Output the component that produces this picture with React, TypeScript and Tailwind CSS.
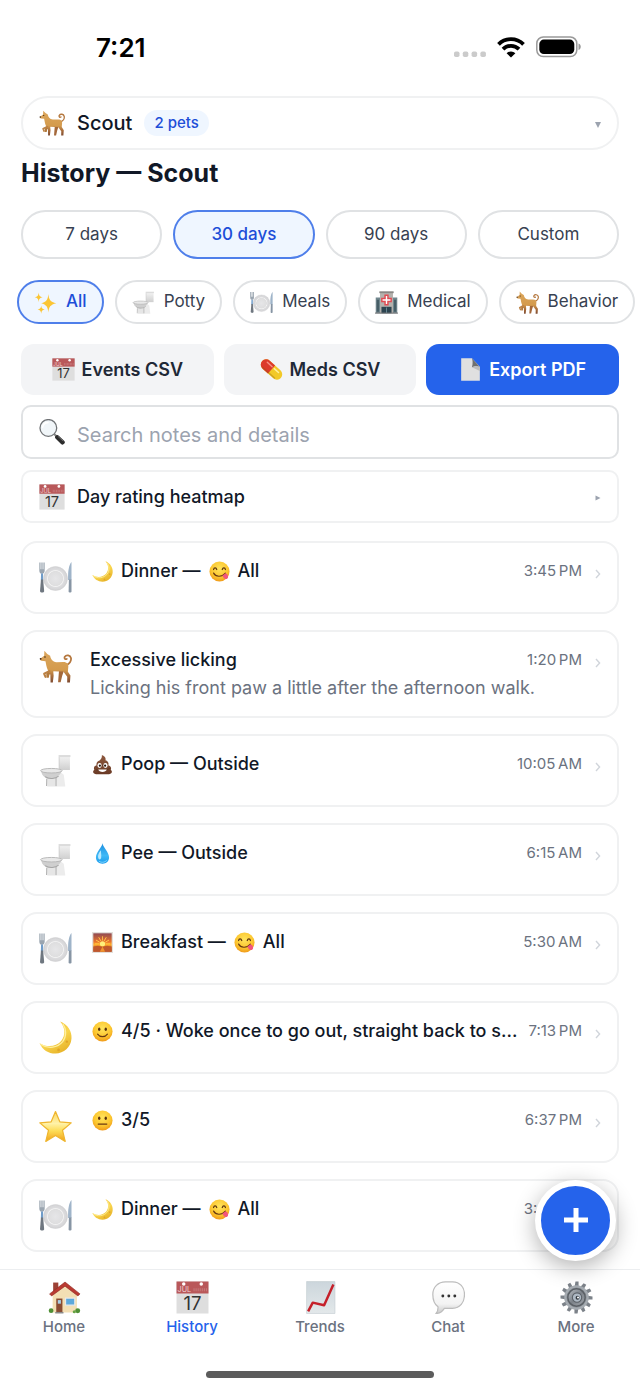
import { useState, type ReactNode } from "react";

type IconName =
  | "dog" | "sparkles" | "toilet" | "plate" | "hospital" | "calendar" | "pill" | "page"
  | "search" | "moon" | "yum" | "poop" | "drop" | "sunrise" | "smile" | "neutral"
  | "star" | "house" | "chart" | "chat" | "gear";

function Defs() {
  return (
    <svg width="0" height="0" className="absolute" aria-hidden="true">
      <defs>
        <linearGradient id="fur" x1="0" y1="0" x2="0" y2="1">
          <stop offset="0" stopColor="#dba65c" />
          <stop offset="0.6" stopColor="#d49b4d" />
          <stop offset="0.8" stopColor="#a96d3b" />
          <stop offset="1" stopColor="#7d4a30" />
        </linearGradient>
        <radialGradient id="face" cx="0.5" cy="0.35" r="0.65">
          <stop offset="0" stopColor="#ffe45c" />
          <stop offset="0.65" stopColor="#fcc62f" />
          <stop offset="1" stopColor="#f09a1a" />
        </radialGradient>
        <linearGradient id="gold" x1="0" y1="0" x2="0" y2="1">
          <stop offset="0" stopColor="#fbd660" />
          <stop offset="0.4" stopColor="#fff2a8" />
          <stop offset="0.65" stopColor="#fddc55" />
          <stop offset="1" stopColor="#f0a01c" />
        </linearGradient>
        <linearGradient id="moonFill" x1="0" y1="0" x2="0.6" y2="1">
          <stop offset="0" stopColor="#f3b92f" />
          <stop offset="0.6" stopColor="#f9d64f" />
          <stop offset="1" stopColor="#e9b62c" />
        </linearGradient>
        <linearGradient id="porcelain" x1="0" y1="0" x2="0" y2="1">
          <stop offset="0" stopColor="#f4f4f4" />
          <stop offset="1" stopColor="#cfcfcf" />
        </linearGradient>
        <radialGradient id="dish" cx="0.5" cy="0.5" r="0.5">
          <stop offset="0" stopColor="#e6e6e8" />
          <stop offset="0.6" stopColor="#dededf" />
          <stop offset="0.66" stopColor="#f3f3f3" />
          <stop offset="0.74" stopColor="#dcdcde" />
          <stop offset="1" stopColor="#d3d3d5" />
        </radialGradient>
        <linearGradient id="water" x1="0" y1="0" x2="0" y2="1">
          <stop offset="0" stopColor="#1d8fe0" />
          <stop offset="0.6" stopColor="#3fb8f6" />
          <stop offset="1" stopColor="#1a9bec" />
        </linearGradient>
        <linearGradient id="dawn" x1="0" y1="0" x2="0" y2="1">
          <stop offset="0" stopColor="#8f4a52" />
          <stop offset="0.45" stopColor="#e9732c" />
          <stop offset="0.6" stopColor="#ffae2b" />
          <stop offset="1" stopColor="#a8432a" />
        </linearGradient>
        <linearGradient id="bubble" x1="0" y1="0" x2="0" y2="1">
          <stop offset="0" stopColor="#ffffff" />
          <stop offset="0.7" stopColor="#f3f3f3" />
          <stop offset="1" stopColor="#c9c9c9" />
        </linearGradient>
        <linearGradient id="metal" x1="0" y1="0" x2="1" y2="1">
          <stop offset="0" stopColor="#b9bec4" />
          <stop offset="0.5" stopColor="#7c8289" />
          <stop offset="1" stopColor="#a0a5ab" />
        </linearGradient>
        <linearGradient id="graph" x1="0" y1="0" x2="0" y2="1">
          <stop offset="0" stopColor="#ccd6dc" />
          <stop offset="1" stopColor="#e3e8ea" />
        </linearGradient>
        <linearGradient id="turd" x1="0" y1="0" x2="0" y2="1">
          <stop offset="0" stopColor="#8e5a3f" />
          <stop offset="1" stopColor="#6a3a25" />
        </linearGradient>
      </defs>
    </svg>
  );
}

const gearTeeth = [0, 30, 60, 90, 120, 150, 180, 210, 240, 270, 300, 330];
const sunRays = [0, 30, 60, 90, 120, 150, 180];

const drawings: Record<IconName, ReactNode> = {
  dog: (
    <g>
      <path d="M26.500 14.500C29.500 13.500 31.600 10.500 31 7.800C30.300 4.900 26.500 4.300 25 6.500C24.200 8.200 25.600 9.500 27 8.600" fill="none" stroke="#b5783f" strokeWidth="1.700" strokeLinecap="round" />
      <path d="M11 19L7 23L7.300 27H9.500L10 24L14 20.500Z" fill="#b27a3c" />
      <path d="M19.500 19L19 25L18.500 31.300H21L22.500 25L24 20.500Z" fill="#a4683a" />
      <path d="M5 5.500L5.200 0.800L8 3.800L10.800 5.500C11.300 8.500 13 11.200 17 11.800L23.500 11.700C27.500 11.700 29 14 28.300 17.500L28 21L30.500 24.800L30 31.500H27.300L27.400 26L23.500 20.800L19 20.800L13.800 20.500L14.200 25L13.400 31.500H11.200L11 24L8.500 19.500C7.200 16.500 6.800 13 6.300 10.800L2.300 10.400C0.700 9.700 0.600 8.500 1.800 7.900Z" fill="url(#fur)" />
      <path d="M10 20.500L5 23L6.300 26" fill="none" stroke="#bb8144" strokeWidth="2" strokeLinecap="round" strokeLinejoin="round" />
      <circle cx="5.800" cy="6.800" r="0.700" fill="#2b1a10" />
      <circle cx="1.600" cy="8.600" r="0.900" fill="#3a2418" />
    </g>
  ),
  sparkles: (
    <g fill="#fbc534">
      <path d="M20 4C20.800 12 22.500 14.800 31 17C22.500 19.200 20.800 22 20 30C19.200 22 17.500 19.200 10 17C17.500 14.800 19.200 12 20 4Z" />
      <path d="M6.500 2C7 6.500 8 7.800 12 8.700C8 9.600 7 11 6.500 15.500C6 11 5 9.600 1 8.700C5 7.800 6 6.500 6.500 2Z" />
      <path d="M10 20C10.400 23.600 11.300 24.800 15 25.600C11.300 26.400 10.400 27.600 10 31.500C9.600 27.600 8.700 26.400 5 25.600C8.700 24.800 9.600 23.600 10 20Z" />
    </g>
  ),
  toilet: (
    <g>
      <path d="M19.500 1.500H30V15.500H19.500Z" fill="url(#porcelain)" />
      <path d="M19 1H30.500V3H19Z" fill="#dcdcdc" />
      <path d="M19.500 3V14" stroke="#c4c4c4" strokeWidth="0.700" />
      <path d="M19 16L24 20L25.500 31.500H16Z" fill="#ececec" />
      <path d="M7 21L8 31.500H17L18 22Z" fill="#e6e6e6" />
      <path d="M7.500 24L7.300 31M16.500 23V31" stroke="#b3b3b3" strokeWidth="1" />
      <path d="M2 16.500C3 22 7 24.500 12 24C17 23.700 21 20 22 16.500Z" fill="#cfcfcf" />
      <path d="M6 22C10 25 16 24 19 21.500" fill="none" stroke="#a5a5a5" strokeWidth="1" />
      <ellipse cx="12" cy="16.200" rx="10.500" ry="2.200" fill="#e8e8e8" stroke="#b5b5b5" strokeWidth="0.900" />
    </g>
  ),
  plate: (
    <g>
      <circle cx="16" cy="17" r="11.600" fill="url(#dish)" stroke="#cdcdcf" strokeWidth="0.500" />
      <path d="M0.300 1.500H1.500V8H2.300V1.500H3.500V8H4.300V1.500H5.500V9.500C5.500 11 4.500 12 3.900 12.300H1.900C1.200 12 0.300 11 0.300 9.500Z" fill="#9aa5b0" />
      <path d="M2 12H3.900L4 19H1.800Z" fill="#6f9cc9" />
      <path d="M1.900 18H4L5 29C5 31 1 31 1 29Z" fill="#6f7780" />
      <path d="M31.500 1C28.800 4 28 10 28.200 18.500H31.500Z" fill="#9fb4c9" />
      <path d="M29 18H31.500V29.500C31.500 31 28.700 31 28.700 29.500Z" fill="#8795a4" />
    </g>
  ),
  hospital: (
    <g>
      <path d="M1 9H8V31H1ZM24 9H31V31H24Z" fill="#71868d" />
      <path d="M2.500 12H5.500V29H2.500ZM26.500 12H29.500V29H26.500Z" fill="#465d66" />
      <path d="M7 1H25V31H7Z" fill="#b4b1ad" />
      <path d="M6 0.500H26V3H6Z" fill="#8a8886" />
      <path d="M14 6H18V10.500H22.500V14.500H18V19H14V14.500H9.500V10.500H14Z" fill="#fff" stroke="#e14a52" strokeWidth="2" />
      <path d="M9 22H23V31H9Z" fill="#2d4450" />
      <path d="M15.500 23H16.500V31H15.500Z" fill="#7fa0ad" />
      <path d="M0 30H32V31.500H0Z" fill="#77797a" />
    </g>
  ),
  calendar: (
    <g fontWeight="400" fontFamily="Inter, sans-serif">
      <path d="M0.500 0.500H31.500V31.500H0.500Z" fill="#dedede" />
      <path d="M0.500 0.500H31.500V12H0.500Z" fill="#b9585a" />
      <circle cx="7.500" cy="3" r="1.700" fill="#fff" />
      <circle cx="24.500" cy="3" r="1.700" fill="#fff" />
      <text x="1.500" y="11" fontSize="7" fill="#f0cfcf">JUL</text>
      <path d="M17 8.500H30" stroke="#c67a7b" strokeWidth="3" strokeDasharray="1 1" />
      <text x="16" y="28.500" fontSize="18" fill="#333" textAnchor="middle">17</text>
    </g>
  ),
  pill: (
    <g transform="rotate(42 16 16)">
      <rect x="-1.500" y="8.500" width="35" height="15" rx="7.500" fill="#f2c928" />
      <path d="M16 8.500H6A7.500 7.500 0 0 0 6 23.500H16Z" fill="#dc3a2c" />
      <path d="M5 12.500H14" stroke="#f59286" strokeWidth="2" strokeLinecap="round" />
      <path d="M18 12.500H26" stroke="#fff0a0" strokeWidth="2" strokeLinecap="round" />
      <path d="M5 22H27" stroke="#8f5a10" strokeOpacity="0.350" strokeWidth="2" strokeLinecap="round" />
    </g>
  ),
  page: (
    <g>
      <path d="M3 0.500H18L29 12V31.500H3Z" fill="#e0e0e0" />
      <path d="M18 0.500L29 12.500C25 10.500 21 11.500 18 13C19.500 8 19 3 18 0.500Z" fill="#6f6f6f" />
      <path d="M18 13C21 11.500 26 11 29 12.500V18Z" fill="#bcbcbc" />
    </g>
  ),
  search: (
    <g>
      <path d="M18.500 18.500L23 22.500" stroke="#888" strokeWidth="2.500" />
      <path d="M22.500 22.500L29 28.700" stroke="#2c2c2c" strokeWidth="5.400" strokeLinecap="round" />
      <path d="M23.500 21.500L29.500 27" stroke="#777" strokeWidth="1" strokeLinecap="round" />
      <circle cx="11.500" cy="11" r="10.300" fill="#f1f6f9" stroke="#707376" strokeWidth="1.600" />
      <path d="M4.500 10A6.500 6.500 0 0 1 11 4.500" fill="none" stroke="#fff" strokeWidth="2" strokeLinecap="round" />
    </g>
  ),
  moon: (
    <g>
      <path d="M20.500 0.500C28 3.500 32 10 31.500 17C31 25.500 24 31.500 16 31.500C9 31.500 3.500 28 0.500 21.500C8 26 16.500 25 21.500 19.500C26 14 25.500 6 20.500 0.500Z" fill="url(#moonFill)" />
      <path d="M1.500 22.500C9 27.500 18 26 23 20C27 14.800 26.500 7.500 23 2.500" fill="none" stroke="#fff0a0" strokeWidth="1.200" />
      <circle cx="27" cy="20" r="1.200" fill="#e0a528" />
      <circle cx="19" cy="28" r="1.300" fill="#e0a528" />
    </g>
  ),
  yum: (
    <g>
      <circle cx="16" cy="16" r="15.300" fill="url(#face)" />
      <path d="M7 13C7.500 9.500 11 9.500 11.800 13M20.200 13C21 9.500 24.500 9.500 25 13" fill="none" stroke="#59320f" strokeWidth="1.800" strokeLinecap="round" />
      <path d="M7 18.500C10 24 19 25.500 25 18.500" fill="none" stroke="#6b3a12" strokeWidth="1.800" strokeLinecap="round" />
      <path d="M20.500 22L25.500 18.500C29 20 30.500 25 27.500 27C24.500 28.500 21.500 25.500 20.500 22Z" fill="#f2557c" />
    </g>
  ),
  poop: (
    <g>
      <path d="M15 1.500C19.500 3 21.500 6 20.500 9.500C24.500 10.500 26 14 24.800 17.200C28.500 18 30 21.500 28.500 24C31.500 26 31 30.500 26 30.700H6C1 30.500 0.500 26 3.500 24C2 21 3.500 18 7 17.200C6 13.500 8.500 11 11.500 10C14 8 15.500 5 15 1.500Z" fill="url(#turd)" />
      <path d="M9 17.500C14 18.500 19 17 22 14.500M6 24C13 26 22 25 27 22" fill="none" stroke="#54301f" strokeWidth="1" />
      <ellipse cx="11.500" cy="17.500" rx="3.200" ry="3.800" fill="#fff" />
      <ellipse cx="20.500" cy="17.500" rx="3.200" ry="3.800" fill="#fff" />
      <circle cx="12" cy="17.800" r="1.700" fill="#26160e" />
      <circle cx="20" cy="17.800" r="1.700" fill="#26160e" />
      <path d="M9.500 23.500H22.500C21.500 28.500 10.500 28.500 9.500 23.500Z" fill="#fff" />
    </g>
  ),
  drop: (
    <g>
      <path d="M16 0.500C17 7 26 14.500 26 22C26 27.800 21.500 31.500 16 31.500C10.500 31.500 6 27.800 6 22C6 14.500 15 7 16 0.500Z" fill="url(#water)" />
      <path d="M13.500 11C10 15.500 8.500 19 9.500 23C10.500 26 13.500 25.500 14 22C14.500 18 13.500 15 13.500 11Z" fill="#b9e9ff" />
      <path d="M11 28C14 30.200 19 30 22 27" fill="none" stroke="#86d8ff" strokeWidth="1.500" strokeLinecap="round" />
    </g>
  ),
  sunrise: (
    <g>
      <path d="M0 0H32V32H0Z" fill="#e3dfda" />
      <path d="M2 2H30V30H2Z" fill="url(#dawn)" />
      <g stroke="#ffc84a" strokeWidth="1.300">
        {sunRays.map((angle) => (
          <path key={angle} d="M4.500 18H11" transform={`rotate(${angle} 16 18)`} />
        ))}
      </g>
      <circle cx="16" cy="18" r="4" fill="#fff07a" />
      <path d="M2 22L9 21L16 22.500L23 21L30 22V30H2Z" fill="#c0582c" />
      <path d="M16 22L12 30H20Z" fill="#f0952f" />
    </g>
  ),
  smile: (
    <g>
      <circle cx="16" cy="16" r="15.300" fill="url(#face)" />
      <ellipse cx="11" cy="12.500" rx="1.800" ry="2.700" fill="#59320f" />
      <ellipse cx="21" cy="12.500" rx="1.800" ry="2.700" fill="#59320f" />
      <path d="M8.500 20C12 25 20 25 23.500 20" fill="none" stroke="#6b3a12" strokeWidth="1.800" strokeLinecap="round" />
    </g>
  ),
  neutral: (
    <g>
      <circle cx="16" cy="16" r="15.300" fill="url(#face)" />
      <ellipse cx="11" cy="12.500" rx="1.800" ry="2.700" fill="#59320f" />
      <ellipse cx="21" cy="12.500" rx="1.800" ry="2.700" fill="#59320f" />
      <path d="M9.500 21.500H22.500" stroke="#6b3a12" strokeWidth="2" strokeLinecap="round" />
    </g>
  ),
  star: (
    <path d="M16 1.500L20.200 11.500L31.200 12.500L22.800 19.700L25.400 30.500L16 24.700L6.600 30.500L9.200 19.700L0.800 12.500L11.800 11.500Z" fill="url(#gold)" stroke="#efb52e" strokeWidth="1.200" strokeLinejoin="round" />
  ),
  house: (
    <g>
      <path d="M5 1.500H10V11H5Z" fill="#9c4236" />
      <path d="M4.500 13L16 4L28 13V30.500H4.500Z" fill="#f3dfb4" />
      <path d="M16.500 1L31 12.500L29 14.500L16.500 5L3.500 14.500L1.500 12.500Z" fill="#b93a31" stroke="#8f2a24" strokeWidth="0.600" />
      <path d="M8 17H14V30.500H8Z" fill="#8a4b32" />
      <path d="M9.500 18.500H12.500V22H9.500Z" fill="#a9cfe6" />
      <path d="M17 16.500H26V23.500H17Z" fill="#5da9dc" stroke="#e9e9e9" strokeWidth="1.200" />
      <path d="M7 30H15V31.500H7Z" fill="#8a8a8a" />
      <circle cx="3" cy="28.800" r="2.300" fill="#4f8f35" />
      <circle cx="28.800" cy="28.800" r="2.400" fill="#4f8f35" />
      <circle cx="25.500" cy="29.800" r="1.500" fill="#67a345" />
    </g>
  ),
  chart: (
    <g>
      <path d="M2.500 0.500H30V31.500H2.500Z" fill="url(#graph)" stroke="#c3ccd1" strokeWidth="0.600" />
      <path d="M4 29.500L8.500 21L19.500 23.500L28.500 3.500" fill="none" stroke="#c5202a" strokeWidth="2.400" strokeLinejoin="round" />
    </g>
  ),
  chat: (
    <g>
      <path d="M13 0.800H20C27 0.800 31.500 6 31.500 13C31.500 21 27 26.500 20 26.500H12C10 29.500 7 31.500 4 31.500C5.500 29.500 6 27.500 5.800 25C2.500 22.500 0.800 18.500 0.800 13C0.800 6 6 0.800 13 0.800Z" fill="url(#bubble)" stroke="#bdbdbd" strokeWidth="1.200" />
      <circle cx="10.500" cy="14.500" r="1.400" fill="#333" />
      <circle cx="16.300" cy="14.500" r="1.400" fill="#333" />
      <circle cx="22.100" cy="14.500" r="1.400" fill="#333" />
    </g>
  ),
  gear: (
    <g>
      {gearTeeth.map((angle) => (
        <path key={angle} d="M14.200 5L15 0.500H18L18 5Z" fill="#7c8289" transform={`rotate(${angle} 16 16)`} />
      ))}
      <circle cx="16" cy="16" r="10.800" fill="#878d93" stroke="#a5abb1" strokeWidth="2.200" />
      <circle cx="16" cy="16" r="8.400" fill="url(#metal)" stroke="#5b6066" strokeWidth="1.400" />
      <circle cx="16.500" cy="16" r="4.500" fill="#aeb9c4" stroke="#5b6168" strokeWidth="1" />
      <circle cx="17" cy="16.300" r="1.900" fill="#333a41" />
      <circle cx="17.500" cy="16" r="1" fill="#fff" />
    </g>
  ),
};

function Icon({ name, className }: { name: IconName; className: string }) {
  return (
    <svg viewBox="0 0 32 32" aria-hidden="true" className={`inline-block shrink-0 ${className}`}>
      {drawings[name]}
    </svg>
  );
}

type Entry = { icon: IconName; lead?: IconName; title: string; mood?: IconName; tail?: string; note?: string; time: string };

const entries: Entry[] = [
  { icon: "plate", lead: "moon", title: "Dinner —", mood: "yum", tail: "All", time: "3:45\u202fPM" },
  { icon: "dog", title: "Excessive licking", note: "Licking his front paw a little after the afternoon walk.", time: "1:20\u202fPM" },
  { icon: "toilet", lead: "poop", title: "Poop — Outside", time: "10:05\u202fAM" },
  { icon: "toilet", lead: "drop", title: "Pee — Outside", time: "6:15\u202fAM" },
  { icon: "plate", lead: "sunrise", title: "Breakfast —", mood: "yum", tail: "All", time: "5:30\u202fAM" },
  { icon: "moon", lead: "smile", title: "4/5 · Woke once to go out, straight back to s...", time: "7:13\u202fPM" },
  { icon: "star", lead: "neutral", title: "3/5", time: "6:37\u202fPM" },
  { icon: "plate", lead: "moon", title: "Dinner —", mood: "yum", tail: "All", time: "3:45\u202fPM" },
];

const ranges = ["7 days", "30 days", "90 days", "Custom"];

const filters: { label: string; icon: IconName }[] = [
  { label: "All", icon: "sparkles" },
  { label: "Potty", icon: "toilet" },
  { label: "Meals", icon: "plate" },
  { label: "Medical", icon: "hospital" },
  { label: "Behavior", icon: "dog" },
];

const tabs: { label: string; icon: IconName }[] = [
  { label: "Home", icon: "house" },
  { label: "History", icon: "calendar" },
  { label: "Trends", icon: "chart" },
  { label: "Chat", icon: "chat" },
  { label: "More", icon: "gear" },
];

const selectedPill = "border-[#4f7fea] bg-[#eff6ff] font-medium text-[#1d4ed8]";
const idlePill = "border-[#e0e2e4] bg-white text-[#374151]";

function StatusBar() {
  return (
    <div className="flex h-24 items-center justify-between pr-[59px] pl-24">
      <span className="text-[26px] leading-8 font-semibold text-black">7:21</span>
      <div className="flex items-center gap-[11px] pb-[2px]">
        <svg viewBox="0 0 32 22" className="h-[22px] w-8" aria-hidden="true" fill="#cbcbcb">
          <rect x="0" y="15.500" width="5.500" height="5.500" rx="1.800" />
          <rect x="8.800" y="15.500" width="5.500" height="5.500" rx="1.800" />
          <rect x="17.600" y="15.500" width="5.500" height="5.500" rx="1.800" />
          <rect x="26.400" y="15.500" width="5.500" height="5.500" rx="1.800" />
        </svg>
        <svg viewBox="0 0 28 22" className="h-[22px] w-7" aria-hidden="true" fill="none" stroke="#000" strokeWidth="3.800">
          <path d="M1.500 8.300A17.700 17.700 0 0 1 26.500 8.300" />
          <path d="M6 13.200A11.300 11.300 0 0 1 22 13.200" />
          <path d="M14 21.500L9.600 17.300A6.200 6.200 0 0 1 18.400 17.300Z" fill="#000" stroke="none" />
        </svg>
        <svg viewBox="0 0 45 22" className="h-[22px] w-[45px]" aria-hidden="true">
          <rect x="0.800" y="1" width="40" height="19.600" rx="6.500" fill="none" stroke="#999" strokeWidth="1.500" />
          <rect x="3.300" y="3.600" width="35" height="14.400" rx="4.500" fill="#000" />
          <path d="M42.500 7.500C45.500 8.500 45.500 13 42.500 14Z" fill="#999" />
        </svg>
      </div>
    </div>
  );
}

function EntryCard({ entry }: { entry: Entry }) {
  return (
    <li>
      <button type="button" className="flex w-full items-start rounded-[16px] border-2 border-[#f0f1f2] bg-white px-4 py-[14px] text-left">
        <span className="mr-[18px] flex h-[41px] items-center">
          <Icon name={entry.icon} className="size-[33px]" />
        </span>
        <span className="min-w-0 flex-1">
          <span className="flex items-center text-[18px] leading-7">
            {entry.lead && <Icon name={entry.lead} className="mr-2 ml-[2px] size-[21px]" />}
            <span className="whitespace-nowrap font-medium text-[#111827]">{entry.title}</span>
            {entry.mood && <Icon name={entry.mood} className="mx-2 size-[21px]" />}
            {entry.tail && <span className="font-medium text-[#111827]">{entry.tail}</span>}
            <span className="ml-auto shrink-0 pl-2 text-[15px] text-[#6b7280]">{entry.time}</span>
          </span>
          {entry.note && <span className="block truncate text-[18px] leading-7 text-[#6b7280]">{entry.note}</span>}
        </span>
        <svg viewBox="0 0 6 10" className="mt-3 ml-[13px] h-[10px] w-[6px] shrink-0" aria-hidden="true" fill="none" stroke="#d1d5db" strokeWidth="1.400">
          <path d="M1 1L4.600 5L1 9" />
        </svg>
      </button>
    </li>
  );
}

export default function App() {
  const [range, setRange] = useState("30 days");
  const [filter, setFilter] = useState("All");
  const [query, setQuery] = useState("");

  return (
    <div className="flex min-h-screen flex-col overflow-x-clip bg-white font-['Inter','Liberation_Sans',sans-serif] text-[#111827]">
      <Defs />
      <StatusBar />
      <main className="flex-1 px-[21px] pb-4">
        <button type="button" className="flex h-[54px] w-full items-center rounded-full border-2 border-[#f0f1f2] px-4 text-left">
          <Icon name="dog" className="mr-3 size-[26px]" />
          <span className="text-[20px] leading-7 font-medium">Scout</span>
          <span className="ml-3 rounded-full bg-[#eff6ff] px-[10px] text-[15px] leading-[26px] font-medium text-[#1d4ed8]">2 pets</span>
          <svg viewBox="0 0 6 6" className="mt-[3px] ml-auto size-[6px]" aria-hidden="true">
            <path d="M0 0H6L3 6Z" fill="#9ca3af" />
          </svg>
        </button>

        <h1 className="mt-[6px] text-[25px] leading-[34px] font-bold">History — Scout</h1>

        <div className="mt-5 grid grid-cols-4 gap-[11px]">
          {ranges.map((label) => (
            <button key={label} type="button" aria-pressed={range === label} onClick={() => setRange(label)}
              className={`h-[49px] rounded-full border-2 text-[17px] ${range === label ? selectedPill : idlePill}`}>
              {label}
            </button>
          ))}
        </div>

        <div className="-mx-1 mt-[21px] flex gap-[11px]">
          {filters.map(({ label, icon }) => (
            <button key={label} type="button" aria-pressed={filter === label} onClick={() => setFilter(label)}
              className={`flex h-11 shrink-0 items-center gap-[9px] rounded-full border-2 px-[15px] text-[17px] ${filter === label ? selectedPill : idlePill}`}>
              <Icon name={icon} className="size-[23px]" />
              {label}
            </button>
          ))}
        </div>

        <div className="mt-5 grid grid-cols-3 gap-[10px] text-[18px] font-semibold">
          <button type="button" className="flex h-[51px] items-center justify-center gap-[7px] rounded-[13px] bg-[#f3f4f6] text-[#1f2937]">
            <Icon name="calendar" className="size-[23px]" />Events CSV
          </button>
          <button type="button" className="flex h-[51px] items-center justify-center gap-[7px] rounded-[13px] bg-[#f3f4f6] text-[#1f2937]">
            <Icon name="pill" className="size-[23px]" />Meds CSV
          </button>
          <button type="button" className="flex h-[51px] items-center justify-center gap-[7px] rounded-[13px] bg-[#2563eb] text-white">
            <Icon name="page" className="size-[23px]" />Export PDF
          </button>
        </div>

        <label className="mt-[10px] flex h-[54px] items-center rounded-[10px] border-2 border-[#e0e2e4] px-4">
          <Icon name="search" className="mr-3 size-[26px]" />
          <input type="text" aria-label="Search notes and details" placeholder="Search notes and details" value={query}
            onChange={(event) => setQuery(event.target.value)}
            className="mt-[6px] min-w-0 flex-1 bg-transparent text-[20px] leading-7 outline-none placeholder:text-[#9ca3af]" />
        </label>

        <button type="button" aria-expanded="false" className="mt-[11px] flex h-[53px] w-full items-center rounded-[10px] border-2 border-[#f0f1f2] px-4 text-left">
          <Icon name="calendar" className="mr-3 size-[26px]" />
          <span className="text-[18px] leading-7 font-medium">Day rating heatmap</span>
          <svg viewBox="0 0 6 6" className="mt-[2px] ml-auto size-[6px]" aria-hidden="true">
            <path d="M0.500 0.500L5.500 3L0.500 5.500Z" fill="#9ca3af" />
          </svg>
        </button>

        <ul className="mt-[18px] flex flex-col gap-4">
          {entries.map((entry, index) => (
            <EntryCard key={index} entry={entry} />
          ))}
        </ul>
      </main>

      <footer className="sticky bottom-0 border-t border-[#eceef0] bg-white">
        <button type="button" aria-label="Add entry"
          className="absolute -top-[90px] right-6 flex size-[81px] items-center justify-center rounded-full border-[6px] border-white bg-[#2563eb] shadow-[0_6px_22px_rgba(0,0,0,0.3)]">
          <svg viewBox="0 0 24 24" className="mb-[2px] size-6" aria-hidden="true">
            <path d="M12 0V24M0 12H24" stroke="#fff" strokeWidth="5" />
          </svg>
        </button>
        <nav className="grid grid-cols-5 pt-[11px]" aria-label="Main">
          {tabs.map(({ label, icon }) => (
            <a key={label} href={`#${label.toLowerCase()}`} aria-current={label === "History" ? "page" : undefined}
              className={`flex flex-col items-center text-[15px] leading-[26px] font-medium ${label === "History" ? "text-[#2563eb]" : "text-[#6b7280]"}`}>
              <Icon name={icon} className="size-[33px]" />
              {label}
            </a>
          ))}
        </nav>
        <div className="mx-auto mt-[31px] mb-3 h-[7px] w-[228px] rounded-full bg-[#5c5c5c]" />
      </footer>
    </div>
  );
}
